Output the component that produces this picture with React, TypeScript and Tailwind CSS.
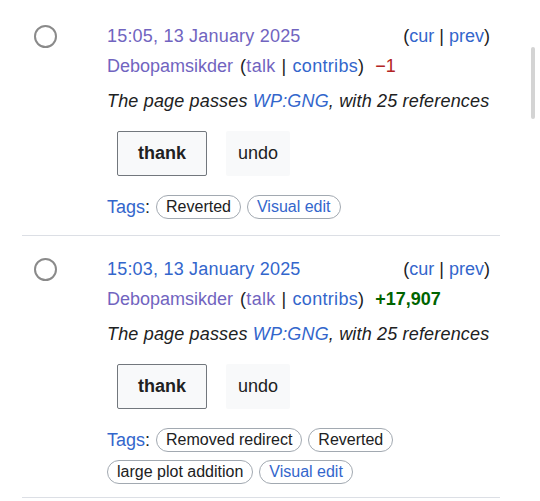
const items = [
  {
    time: "15:05, 13 January 2025",
    visited: true,
    diff: "−1",
    positive: false,
    tags: [
      { name: "Reverted", link: false },
      { name: "Visual edit", link: true },
    ],
  },
  {
    time: "15:03, 13 January 2025",
    visited: false,
    diff: "+17,907",
    positive: true,
    tags: [
      { name: "Removed redirect", link: false },
      { name: "Reverted", link: false },
      { name: "large plot addition", link: false },
      { name: "Visual edit", link: true },
    ],
  },
]

export default function App() {
  return (
    <div className="relative w-[540px] h-[501px] overflow-hidden bg-white font-['Liberation_Sans',Arial,sans-serif] text-[#202122]">
      <div className="absolute right-[5px] top-[47px] w-[4px] h-[72px] rounded-full bg-[#d4d4d4]" />
      <ul className="w-[478px] ml-[22px] pt-[3px]">
        {items.map((item, idx) => (
          <li key={idx} className="flex pt-[18px] pb-[13px] border-b border-[#dcdfe5]">
            <div className="w-[85px] shrink-0 pl-[12px] pt-[4px]">
              <div className="w-[23px] h-[23px] rounded-full border-2 border-[#8a8a8a]" />
            </div>
            <div className="flex-1 pr-[10px]">
              <div className="flex justify-between h-[30px] items-center text-[18px]">
                <span className={item.visited ? "text-[#7164c0] tracking-[0.2px]" : "text-[#3366cc] tracking-[0.2px]"}>{item.time}</span>
                <span>
                  (<span className="text-[#3366cc]">cur</span> | <span className="text-[#3366cc]">prev</span>)
                </span>
              </div>
              <div className="flex h-[30px] items-center text-[18px]">
                <span className="text-[#7164c0]">Debopamsikder</span>
                <span className="ml-[7px] tracking-[0.3px]">
                  (<span className="text-[#7164c0]">talk</span>
                  <span className="px-[6px]">|</span>
                  <span className="text-[#3366cc]">contribs</span>)
                </span>
                <span className={item.positive ? "ml-[11px] font-bold text-[#006400]" : "ml-[11px] text-[#b32424]"}>{item.diff}</span>
              </div>
              <div className="mt-[5px] h-[30px] flex items-center text-[18px] italic tracking-[0.17px]">
                The page passes&nbsp;<span className="text-[#3366cc]">WP:GNG</span>, with 25 references
              </div>
              <div className="mt-[15px] ml-[10px] flex gap-[19px]">
                <button className="w-[90px] h-[45px] rounded-[2px] border border-[#72777d] bg-[#f8f9fa] text-[18px] font-bold">
                  thank
                </button>
                <button className="w-[64px] h-[45px] rounded-[2px] bg-[#f8f9fa] text-[18px]">undo</button>
              </div>
              <div className="mt-[16px] flex flex-wrap items-center gap-x-[6px] gap-y-[5px] text-[16px] leading-[30px]">
                <span className="text-[18px]">
                  <span className="text-[#3366cc]">Tags</span>:
                </span>
                {item.tags.map((tag) => (
                  <span
                    key={tag.name}
                    className={
                      "h-[24px] flex items-center px-[9px] rounded-full border-[1.5px] border-[#a2a9b1] " +
                      (tag.link ? "text-[#3366cc]" : "text-[#202122]")
                    }
                  >
                    {tag.name}
                  </span>
                ))}
              </div>
            </div>
          </li>
        ))}
      </ul>
    </div>
  )
}
